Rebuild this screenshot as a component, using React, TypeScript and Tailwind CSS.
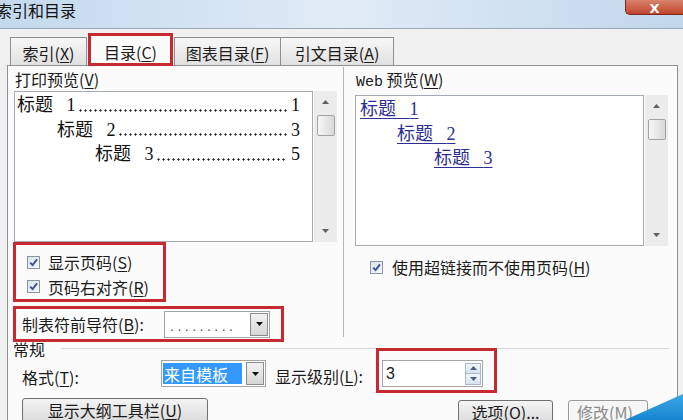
import React from 'react';

const Acc: React.FC<{ text: string; k: string; tail?: string }> = ({ text, k, tail }) => (
  <span>
    {text}(<span className="underline underline-offset-2">{k}</span>){tail}
  </span>
);

const CheckBox: React.FC = () => (
  <span className="flex h-[13px] w-[13px] shrink-0 items-center justify-center border border-[#8a96a6] bg-linear-to-br from-[#d9e3ee] to-[#f7f9fc]">
    <svg width="9" height="9" viewBox="0 0 9 9">
      <path d="M1.2 4.6 L3.6 7.1 L8 1.4" fill="none" stroke="#3a5196" strokeWidth="1.9" />
    </svg>
  </span>
);

const Tri: React.FC<{ up?: boolean; color?: string }> = ({ up, color = '#5f5f5f' }) => (
  <svg width="7" height="4" viewBox="0 0 7 4">
    <path d={up ? 'M0 4 L3.5 0 L7 4 Z' : 'M0 0 L7 0 L3.5 4 Z'} fill={color} />
  </svg>
);

const ScrollBar: React.FC = () => (
  <div className="ml-[1px] flex h-[151px] w-[23px] flex-col items-center bg-[#ececec]">
    <div className="flex h-[22px] items-center">
      <Tri up />
    </div>
    <div className="mt-[2px] h-[21px] w-[18px] rounded-[2px] border border-[#a3a3a3] bg-linear-to-r from-[#f6f6f6] to-[#d9d9d9]" />
    <div className="flex-1" />
    <div className="flex h-[22px] items-center">
      <Tri />
    </div>
  </div>
);

const DropBtn: React.FC = () => (
  <div className="flex h-[23px] w-[18px] items-center justify-center border border-[#8c8c8c] bg-linear-to-b from-[#f2f2f2] to-[#d6d6d6]">
    <Tri color="#111" />
  </div>
);

// dot leader drawn as a repeated dot pattern
const TocLine: React.FC<{ n: number; page: number; pad: string }> = ({ n, page, pad }) => (
  <div className={`flex whitespace-nowrap pr-[12px] ${pad}`}>
    <span>标题{'\u00a0\u00a0\u00a0'}{n}</span>
    <span className="mb-[6px] ml-[2px] mr-[4px] h-[3px] flex-1 self-end bg-[radial-gradient(circle,#2a2a2a_0.9px,transparent_1.3px)] bg-repeat-x [background-size:5px_3px]" />
    <span>{page}</span>
  </div>
);

const WebLine: React.FC<{ n: number; pad: string }> = ({ n, pad }) => (
  <div className={pad}>
    <span className="text-[#2b2e94] underline underline-offset-[3px]">标题{'\u00a0\u00a0\u00a0'}{n}</span>
  </div>
);

export default function App() {
  return (
    <div className="relative h-[420px] w-[683px] overflow-hidden bg-[#f0f0f0] font-['Noto_Sans_CJK_SC',sans-serif] text-[16px] leading-[18px] text-[#1b1b1b]">
      {/* title bar */}
      <div className="relative h-[29px] border-b border-[#9aaabb] bg-linear-to-r from-[#c4d9ee] via-[#e0ebf6] to-[#c2d7ec]">
        <div className="-ml-[4px] pt-[1px] text-[16px] text-[#111]">索引和目录</div>
        <div className="absolute right-0 top-0 flex h-[15px] w-[58px] items-end justify-center rounded-bl-[5px] border-b border-l border-[#7c2a1c] bg-linear-to-b from-[#d9826c] to-[#c0432b]">
          <span className="-mb-[1px] font-['DejaVu_Sans',sans-serif] text-[13px] font-bold leading-[13px] text-white">X</span>
        </div>
      </div>

      {/* tabs */}
      <div className="flex h-[36px] items-end pl-[10px]">
        <div className="flex h-[28px] w-[77px] items-center justify-center border border-b-0 border-[#8d9095] bg-linear-to-b from-[#f7f7f7] to-[#e1e1e1] pt-[2px]">
          <Acc text="索引" k="X" />
        </div>
        <div className="relative z-10 -mb-[1px] ml-[1px] flex h-[33px] w-[85px] items-center justify-center border-[3px] border-[#c62a30] bg-[#fbfbfb] pt-[4px]">
          <Acc text="目录" k="C" />
        </div>
        <div className="ml-[1px] flex h-[28px] w-[107px] items-center justify-center border border-b-0 border-[#8d9095] bg-linear-to-b from-[#f7f7f7] to-[#e1e1e1] pt-[2px]">
          <Acc text="图表目录" k="F" />
        </div>
        <div className="flex h-[28px] w-[113px] items-center justify-center border border-b-0 border-l-0 border-[#8d9095] bg-linear-to-b from-[#f7f7f7] to-[#e1e1e1] pt-[2px]">
          <Acc text="引文目录" k="A" />
        </div>
      </div>

      {/* panel */}
      <div className="ml-[7px] h-[400px] w-[671px] border border-[#8d9095] bg-[#fbfbfb]">
        <div className="flex">
          {/* left column */}
          <div className="w-[335px] pl-[6px] pt-[4px]">
            <div className="pl-[1px]">
              <Acc text="打印预览" k="V" />
            </div>
            <div className="mt-[3px] flex">
              <div className="h-[151px] w-[299px] border border-[#a3aab3] bg-white pt-[1px] font-['Liberation_Serif','Noto_Sans_CJK_SC',serif] text-[18px] leading-[24.5px] text-[#111]">
                <TocLine n={1} page={1} pad="pl-[2px]" />
                <TocLine n={2} page={3} pad="pl-[42px]" />
                <TocLine n={3} page={5} pad="pl-[80px]" />
              </div>
              <ScrollBar />
            </div>
            <div className="-ml-[1px] flex h-[60px] w-[153px] flex-col border-[3px] border-[#c62a30] pl-[11px] pt-[5px]">
              <div className="flex h-[26px] items-center gap-[8px]">
                <CheckBox />
                <Acc text="显示页码" k="S" />
              </div>
              <div className="flex h-[26px] items-center gap-[8px]">
                <CheckBox />
                <Acc text="页码右对齐" k="R" />
              </div>
            </div>
            <div className="-ml-[1px] mt-[4px] flex h-[36px] w-[271px] items-center border-[3px] border-[#c62a30] pl-[6px]">
              <div className="w-[142px]">
                <Acc text="制表符前导符" k="B" tail=":" />
              </div>
              <div className="flex h-[27px] w-[106px] items-center border border-[#a5a5a5] bg-white pl-[5px] pr-[1px]">
                <span className="flex-1 pt-[3px] font-['Liberation_Sans',sans-serif] text-[14px] tracking-[3.5px] text-[#555]">.........</span>
                <DropBtn />
              </div>
            </div>
          </div>

          {/* right column */}
          <div className="mt-[1px] h-[270px] flex-1 border-l border-[#b4b4b4] pl-[11px] pt-[3px]">
            <div className="pl-[1px]">
              <span className="font-['Liberation_Mono',monospace] text-[15px]">Web</span> <Acc text="预览" k="W" />
            </div>
            <div className="mt-[3px] flex">
              <div className="h-[151px] w-[289px] border border-[#a3aab3] bg-white pt-[1px] font-['Liberation_Serif','Noto_Sans_CJK_SC',serif] text-[18px] leading-[24.5px]">
                <WebLine n={1} pad="pl-[4px]" />
                <WebLine n={2} pad="pl-[41px]" />
                <WebLine n={3} pad="pl-[78px]" />
              </div>
              <ScrollBar />
            </div>
            <div className="mt-[8px] flex h-[26px] items-center gap-[9px] pl-[15px]">
              <CheckBox />
              <Acc text="使用超链接而不使用页码" k="H" />
            </div>
          </div>
        </div>

        {/* 常规 */}
        <div className="flex h-[16px] items-start pl-[5px]">
          <span className="-mt-[1px] leading-[17px]">常规</span>
          <div className="ml-[16px] mr-[8px] mt-[6px] flex-1 border-t border-[#d5d5d5]" />
        </div>

        <div className="-mt-[10px] flex h-[45px] items-start">
          <div className="mt-[20px] w-[153px] pl-[14px]">
            <Acc text="格式" k="T" tail=":" />
          </div>
          <div className="mt-[12px] flex h-[27px] w-[105px] items-center border border-[#a5a5a5] bg-white pl-[1px] pr-[1px]">
            <span className="flex h-[21px] w-[79px] items-center bg-[#3399ff] pl-[1px] text-white">来自模板</span>
            <span className="flex-1" />
            <DropBtn />
          </div>
          <div className="ml-[9px] mt-[19px] w-[101px]">
            <Acc text="显示级别" k="L" tail=":" />
          </div>
          <div className="h-[45px] w-[121px] border-[3px] border-[#c62a30] pl-[3px] pt-[9px]">
            <div className="flex h-[27px] w-[101px] items-center border border-[#a5a5a5] bg-white pl-[3px] pr-[1px]">
              <span className="flex-1 font-['Liberation_Sans',sans-serif] text-[16px]">3</span>
              <div className="flex flex-col">
                <div className="flex h-[11px] w-[16px] items-center justify-center border border-[#a9b7c9] bg-linear-to-b from-[#f2f6fb] to-[#d6e2ef]">
                  <Tri up color="#4a5f80" />
                </div>
                <div className="flex h-[11px] w-[16px] items-center justify-center border border-t-0 border-[#a9b7c9] bg-linear-to-b from-[#f2f6fb] to-[#d6e2ef]">
                  <Tri color="#4a5f80" />
                </div>
              </div>
            </div>
          </div>
        </div>

        {/* buttons */}
        <div className="mt-[5px] flex items-start">
          <div className="ml-[14px] flex h-[24px] w-[186px] items-center justify-center rounded-[3px] border border-[#707070] bg-linear-to-b from-[#f4f4f4] to-[#dcdcdc]">
            <Acc text="显示大纲工具栏" k="U" />
          </div>
          <div className="ml-[250px] mt-[2px] flex h-[24px] w-[95px] items-center justify-center rounded-[3px] border border-[#707070] bg-linear-to-b from-[#f4f4f4] to-[#dcdcdc]">
            <Acc text="选项" k="O" tail="..." />
          </div>
          <div className="ml-[15px] mt-[2px] flex h-[24px] w-[80px] items-center justify-start rounded-[3px] border border-[#9a9a9a] bg-[#f6f6f6] pl-[8px] text-[#8a8a8a]">
            <Acc text="修改" k="M" />
          </div>
        </div>
      </div>

      {/* corner decoration */}
      <div className="absolute bottom-0 right-0 h-[26px] w-[58px] bg-linear-to-b from-[#3aa6e6] to-[#1586d0] [clip-path:polygon(100%_0,100%_100%,0_100%)]" />
    </div>
  );
}
